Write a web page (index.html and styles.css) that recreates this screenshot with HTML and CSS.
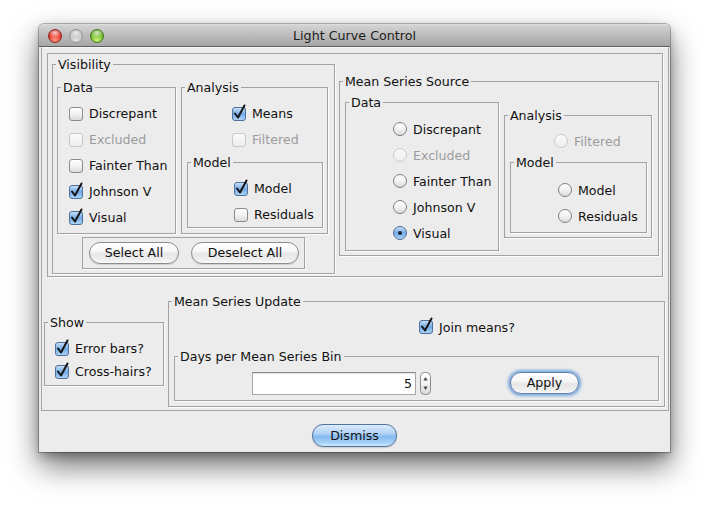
FILE: index.html
```html
<!DOCTYPE html>
<html>
<head>
<meta charset="utf-8">
<title>Light Curve Control</title>
<link rel="stylesheet" href="styles.css">
</head>
<body>
<svg class="defs" aria-hidden="true">
  <defs>
    <linearGradient id="gw" x1="0" y1="0" x2="0" y2="1">
      <stop offset="0" stop-color="#ffffff"/>
      <stop offset="0.5" stop-color="#f2f2f2"/>
      <stop offset="1" stop-color="#d9d9d9"/>
    </linearGradient>
    <linearGradient id="gb" x1="0" y1="0" x2="0" y2="1">
      <stop offset="0" stop-color="#cfe4f9"/>
      <stop offset="0.5" stop-color="#74aae6"/>
      <stop offset="1" stop-color="#b0d7f8"/>
    </linearGradient>
    <linearGradient id="gd" x1="0" y1="0" x2="0" y2="1">
      <stop offset="0" stop-color="#fbfbfb"/>
      <stop offset="1" stop-color="#ededed"/>
    </linearGradient>
  </defs>
</svg>

<div class="window">
  <div class="titlebar">
    <div class="lights">
      <span class="light red"></span>
      <span class="light gray"></span>
      <span class="light green"></span>
    </div>
    <div class="title">Light Curve Control</div>
    <div></div>
  </div>

  <div class="main">
    <div class="top-panel">
      <fieldset class="grp vis">
        <legend>Visibility</legend>
        <div class="vis-in">
          <div class="pair">
            <fieldset class="grp vdata">
              <legend>Data</legend>
              <div class="in vdata-in">
                <div class="row"><svg class="ck" viewBox="0 0 14 14"><rect x="0.5" y="0.5" width="13" height="13" rx="2.5" fill="url(#gw)" stroke="#8a8a8a"/></svg><span>Discrepant</span></div>
                <div class="row off"><svg class="ck" viewBox="0 0 14 14"><rect x="0.5" y="0.5" width="13" height="13" rx="2.5" fill="url(#gd)" stroke="#c9c9c9"/></svg><span>Excluded</span></div>
                <div class="row"><svg class="ck" viewBox="0 0 14 14"><rect x="0.5" y="0.5" width="13" height="13" rx="2.5" fill="url(#gw)" stroke="#8a8a8a"/></svg><span>Fainter Than</span></div>
                <div class="row"><svg class="ck" viewBox="0 0 14 14"><rect x="0.5" y="0.5" width="13" height="13" rx="2.5" fill="url(#gb)" stroke="#4f6f9c"/><path d="M3 6.5 L6 10.5 L12.5 -1.5" fill="none" stroke="#151515" stroke-width="2" stroke-linecap="round" stroke-linejoin="round"/></svg><span>Johnson V</span></div>
                <div class="row"><svg class="ck" viewBox="0 0 14 14"><rect x="0.5" y="0.5" width="13" height="13" rx="2.5" fill="url(#gb)" stroke="#4f6f9c"/><path d="M3 6.5 L6 10.5 L12.5 -1.5" fill="none" stroke="#151515" stroke-width="2" stroke-linecap="round" stroke-linejoin="round"/></svg><span>Visual</span></div>
              </div>
            </fieldset>
            <fieldset class="grp vana">
              <legend>Analysis</legend>
              <div class="in vana-in">
                <div class="row ind50"><svg class="ck" viewBox="0 0 14 14"><rect x="0.5" y="0.5" width="13" height="13" rx="2.5" fill="url(#gb)" stroke="#4f6f9c"/><path d="M3 6.5 L6 10.5 L12.5 -1.5" fill="none" stroke="#151515" stroke-width="2" stroke-linecap="round" stroke-linejoin="round"/></svg><span>Means</span></div>
                <div class="row ind50 off"><svg class="ck" viewBox="0 0 14 14"><rect x="0.5" y="0.5" width="13" height="13" rx="2.5" fill="url(#gd)" stroke="#c9c9c9"/></svg><span>Filtered</span></div>
                <fieldset class="grp vmodel">
                  <legend>Model</legend>
                  <div class="in vmodel-in">
                    <div class="row"><svg class="ck" viewBox="0 0 14 14"><rect x="0.5" y="0.5" width="13" height="13" rx="2.5" fill="url(#gb)" stroke="#4f6f9c"/><path d="M3 6.5 L6 10.5 L12.5 -1.5" fill="none" stroke="#151515" stroke-width="2" stroke-linecap="round" stroke-linejoin="round"/></svg><span>Model</span></div>
                    <div class="row"><svg class="ck" viewBox="0 0 14 14"><rect x="0.5" y="0.5" width="13" height="13" rx="2.5" fill="url(#gw)" stroke="#8a8a8a"/></svg><span>Residuals</span></div>
                  </div>
                </fieldset>
              </div>
            </fieldset>
          </div>
          <div class="btnpanel">
            <button class="btn sel">Select All</button>
            <button class="btn desel">Deselect All</button>
          </div>
        </div>
      </fieldset>

      <fieldset class="grp mss">
        <legend>Mean Series Source</legend>
        <div class="mss-in">
          <fieldset class="grp mdata">
            <legend>Data</legend>
            <div class="in mdata-in">
              <div class="row"><svg class="rd" viewBox="0 0 14 14"><circle cx="7" cy="7" r="6.5" fill="url(#gw)" stroke="#7f7f7f"/></svg><span>Discrepant</span></div>
              <div class="row off"><svg class="rd" viewBox="0 0 14 14"><circle cx="7" cy="7" r="6.5" fill="url(#gd)" stroke="#c9c9c9"/></svg><span>Excluded</span></div>
              <div class="row"><svg class="rd" viewBox="0 0 14 14"><circle cx="7" cy="7" r="6.5" fill="url(#gw)" stroke="#7f7f7f"/></svg><span>Fainter Than</span></div>
              <div class="row"><svg class="rd" viewBox="0 0 14 14"><circle cx="7" cy="7" r="6.5" fill="url(#gw)" stroke="#7f7f7f"/></svg><span>Johnson V</span></div>
              <div class="row"><svg class="rd" viewBox="0 0 14 14"><circle cx="7" cy="7" r="6.5" fill="url(#gb)" stroke="#4f6f9c"/><circle cx="7" cy="7" r="2" fill="#1c2535"/></svg><span>Visual</span></div>
            </div>
          </fieldset>
          <fieldset class="grp mana">
            <legend>Analysis</legend>
            <div class="in mana-in">
              <div class="row ind49 off"><svg class="rd" viewBox="0 0 14 14"><circle cx="7" cy="7" r="6.5" fill="url(#gd)" stroke="#c9c9c9"/></svg><span>Filtered</span></div>
              <fieldset class="grp mmodel">
                <legend>Model</legend>
                <div class="in mmodel-in">
                  <div class="row"><svg class="rd" viewBox="0 0 14 14"><circle cx="7" cy="7" r="6.5" fill="url(#gw)" stroke="#7f7f7f"/></svg><span>Model</span></div>
                  <div class="row"><svg class="rd" viewBox="0 0 14 14"><circle cx="7" cy="7" r="6.5" fill="url(#gw)" stroke="#7f7f7f"/></svg><span>Residuals</span></div>
                </div>
              </fieldset>
            </div>
          </fieldset>
        </div>
      </fieldset>
    </div>

    <div class="bottom-row">
      <fieldset class="grp show">
        <legend>Show</legend>
        <div class="in show-in">
          <div class="row r23"><svg class="ck" viewBox="0 0 14 14"><rect x="0.5" y="0.5" width="13" height="13" rx="2.5" fill="url(#gb)" stroke="#4f6f9c"/><path d="M3 6.5 L6 10.5 L12.5 -1.5" fill="none" stroke="#151515" stroke-width="2" stroke-linecap="round" stroke-linejoin="round"/></svg><span>Error bars?</span></div>
          <div class="row r23"><svg class="ck" viewBox="0 0 14 14"><rect x="0.5" y="0.5" width="13" height="13" rx="2.5" fill="url(#gb)" stroke="#4f6f9c"/><path d="M3 6.5 L6 10.5 L12.5 -1.5" fill="none" stroke="#151515" stroke-width="2" stroke-linecap="round" stroke-linejoin="round"/></svg><span>Cross-hairs?</span></div>
        </div>
      </fieldset>
      <fieldset class="grp msu">
        <legend>Mean Series Update</legend>
        <div class="in msu-in">
          <div class="row join"><svg class="ck" viewBox="0 0 14 14"><rect x="0.5" y="0.5" width="13" height="13" rx="2.5" fill="url(#gb)" stroke="#4f6f9c"/><path d="M3 6.5 L6 10.5 L12.5 -1.5" fill="none" stroke="#151515" stroke-width="2" stroke-linecap="round" stroke-linejoin="round"/></svg><span>Join means?</span></div>
          <fieldset class="grp days">
            <legend>Days per Mean Series Bin</legend>
            <div class="days-in">
              <input class="field" type="text" value="5" readonly>
              <svg class="spin" viewBox="0 0 11 23"><rect x="0.5" y="0.5" width="10" height="22" rx="4" fill="url(#gw)" stroke="#8a8a8a"/><path d="M5.5 5 L7.7 8.5 L3.3 8.5 Z" fill="#4a4a4a"/><path d="M5.5 18 L7.7 14.5 L3.3 14.5 Z" fill="#4a4a4a"/></svg>
              <button class="btn apply">Apply</button>
            </div>
          </fieldset>
        </div>
      </fieldset>
    </div>
  </div>

  <div class="footer">
    <button class="btn dismiss">Dismiss</button>
  </div>
</div>
</body>
</html>
```

FILE: styles.css
```css
html, body {
  margin: 0;
  padding: 0;
  background: #ffffff;
}

body {
  font-family: "DejaVu Sans", "Liberation Sans", sans-serif;
  font-size: 12.6px;
  color: #111111;
  min-height: 507px;
}

.defs {
  position: absolute;
  width: 0;
  height: 0;
}

.window {
  margin: 24px 0 0 39px;
  width: 631px;
  height: 428px;
  background: #ececec;
  border-radius: 5px 5px 0 0;
  box-shadow: 0 0 0 1px rgba(0, 0, 0, 0.26), 0 14px 30px rgba(0, 0, 0, 0.55), 0 4px 10px rgba(0, 0, 0, 0.25);
  display: flex;
  flex-direction: column;
}

/* ---------- title bar ---------- */
.titlebar {
  box-sizing: border-box;
  height: 23px;
  padding-top: 1px;
  border-bottom: 1px solid #5e5e5e;
  border-radius: 5px 5px 0 0;
  background: linear-gradient(#e4e4e4 0px, #d3d3d3 1px, #bdbdbd 50%, #a6a6a6 100%);
  display: grid;
  grid-template-columns: 1fr auto 1fr;
  align-items: center;
}

.lights {
  display: flex;
  gap: 7px;
  padding-left: 9px;
}

.light {
  width: 14px;
  height: 14px;
  border-radius: 50%;
  box-sizing: border-box;
}

.light.red {
  border: 1px solid #8e2018;
  background:
    radial-gradient(ellipse 60% 40% at 50% 22%, rgba(255, 255, 255, 0.75), rgba(255, 255, 255, 0) 100%),
    radial-gradient(circle at 50% 85%, #ff9a8a 0%, #e8392c 55%, #a5160f 100%);
}

.light.gray {
  border: 1px solid #959595;
  background:
    radial-gradient(ellipse 60% 40% at 50% 22%, rgba(255, 255, 255, 0.7), rgba(255, 255, 255, 0) 100%),
    radial-gradient(circle at 50% 85%, #e2e2e2 0%, #c3c3c3 55%, #a2a2a2 100%);
}

.light.green {
  border: 1px solid #3d7a14;
  background:
    radial-gradient(ellipse 60% 40% at 50% 22%, rgba(255, 255, 255, 0.7), rgba(255, 255, 255, 0) 100%),
    radial-gradient(circle at 50% 85%, #c6f27a 0%, #74bb2e 55%, #3f8714 100%);
}

.title {
  font-size: 12.7px;
  color: #1c1c1c;
  line-height: 15px;
}

/* ---------- main panel ---------- */
.main {
  box-sizing: border-box;
  margin-left: 2px;
  width: 628px;
  height: 364px;
  border: 1px solid #a4a4a4;
  border-top-color: #f7f7f7;
}

.top-panel {
  box-sizing: border-box;
  margin: 5px 0 0 5px;
  width: 616px;
  height: 224px;
  border: 1px solid #a2a2a2;
  box-shadow: 1px 1px 0 #fbfbfb;
  display: flex;
  align-items: center;
  gap: 4px;
  padding: 0 3px 0 4px;
}

.bottom-row {
  display: flex;
  align-items: center;
  gap: 4px;
  padding: 17px 0 3px 2px;
}

/* ---------- titled groups ---------- */
.grp {
  box-sizing: border-box;
  margin: 0;
  padding: 0;
  min-width: 0;
  border: 1px solid #a2a2a2;
  box-shadow: 1px 1px 0 #fbfbfb;
}

.grp > legend {
  margin-left: 3px;
  padding: 0 2px;
  line-height: 15px;
  font-size: 12.6px;
  color: #111111;
}

.row {
  height: 26px;
  display: flex;
  align-items: center;
  gap: 6px;
  white-space: nowrap;
}

.row.r23 {
  height: 23px;
}

.row.off {
  color: #9c9c9c;
}

.ck, .rd {
  width: 14px;
  height: 14px;
  flex: none;
  overflow: visible;
}

/* Visibility */
.vis {
  width: 283px;
  height: 217px;
}

.vis-in {
  padding: 8px 6px 0 4px;
}

.pair {
  display: flex;
  gap: 5px;
}

.vdata {
  width: 119px;
  height: 154px;
}

.vdata-in {
  padding: 6px 0 0 11px;
}

.vana {
  width: 147px;
  height: 154px;
}

.vana-in {
  padding-top: 6px;
}

.ind50 {
  padding-left: 50px;
}

.ind49 {
  padding-left: 49px;
}

.vmodel {
  margin: 2px 0 0 5px;
  width: 136px;
  height: 73px;
}

.vmodel-in {
  padding: 6px 0 0 46px;
}

.btnpanel {
  box-sizing: border-box;
  margin: 3px 0 0 25px;
  width: 223px;
  height: 32px;
  border: 1px solid #a2a2a2;
  box-shadow: 1px 1px 0 #fbfbfb;
  display: flex;
  gap: 12px;
  padding: 4px 0 0 6px;
}

/* Mean Series Source */
.mss {
  width: 320px;
  height: 182px;
}

.mss-in {
  display: flex;
  align-items: center;
  gap: 5px;
  padding: 6px 0 0 5px;
}

.mdata {
  width: 154px;
  height: 156px;
}

.mdata-in {
  padding: 6px 0 0 47px;
}

.mana {
  width: 148px;
  height: 130px;
}

.mana-in {
  padding-top: 5px;
}

.mmodel {
  margin: 1px 0 0 5px;
  width: 137px;
  height: 78px;
}

.mmodel-in {
  padding: 7px 0 0 47px;
}

/* Show */
.show {
  width: 120px;
  height: 71px;
}

.show-in {
  padding: 7px 0 0 10px;
}

/* Mean Series Update */
.msu {
  width: 497px;
  height: 113px;
}

.msu-in {
  padding-top: 5px;
}

.join {
  padding-left: 250px;
}

.days {
  margin: 9px 0 0 5px;
  width: 485px;
  height: 52px;
}

.days-in {
  display: flex;
  align-items: flex-start;
  padding: 8px 0 0 77px;
}

.field {
  box-sizing: border-box;
  width: 164px;
  height: 23px;
  margin: 0;
  padding: 0 3px 0 0;
  border: 1px solid #a8a8a8;
  border-top-color: #8a8a8a;
  background: #ffffff;
  box-shadow: inset 0 1px 1px rgba(0, 0, 0, 0.12);
  font-family: inherit;
  font-size: 12.6px;
  color: #111111;
  text-align: right;
  outline: none;
}

.spin {
  width: 11px;
  height: 23px;
  margin-left: 4px;
  flex: none;
}

/* ---------- buttons ---------- */
.btn {
  box-sizing: border-box;
  height: 22px;
  margin: 0;
  padding: 0;
  border: 1px solid #8c8c8c;
  border-radius: 11px;
  background: linear-gradient(#ffffff 0%, #f7f7f7 40%, #e6e6e6 55%, #efefef 85%, #fbfbfb 100%);
  box-shadow: 0 1px 1px rgba(0, 0, 0, 0.12);
  font-family: inherit;
  font-size: 12.6px;
  color: #111111;
  line-height: 20px;
}

.sel {
  width: 90px;
}

.desel {
  width: 108px;
}

.apply {
  width: 69px;
  margin-left: 79px;
  border-color: #5f7fae;
  box-shadow: 0 0 0 1px #8fb6e2, 0 0 3px 2px rgba(86, 144, 214, 0.75);
}

.footer {
  display: flex;
  justify-content: center;
  padding-top: 13px;
}

.dismiss {
  width: 85px;
  height: 23px;
  border-color: #55739f;
  background: linear-gradient(#dcecfc 0%, #b2d3f5 40%, #86bbef 55%, #a6d2f7 85%, #cfeafd 100%);
}
```
